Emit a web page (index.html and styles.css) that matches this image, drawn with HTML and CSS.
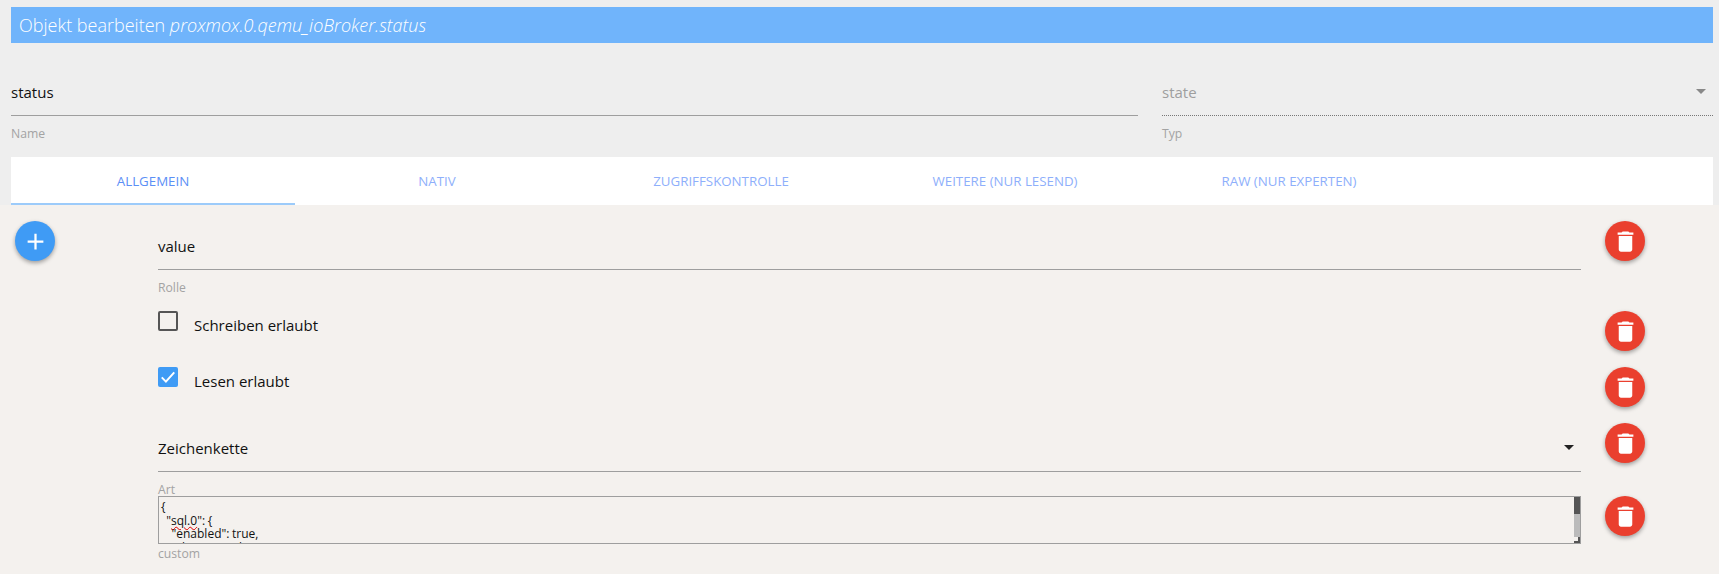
FILE: index.html
```html
<!DOCTYPE html>
<html lang="de">
<head>
  <meta charset="UTF-8">
  <title>Objekt bearbeiten</title>
  <link rel="stylesheet" href="styles.css">
</head>
<body>
  <svg class="defs" width="0" height="0">
    <symbol id="trash" viewBox="0 0 24 24"><path d="M6 19c0 1.1.9 2 2 2h8c1.1 0 2-.9 2-2V7H6v12zM19 4h-3.5l-1-1h-5l-1 1H5v2h14V4z"/></symbol>
  </svg>

  <h1 class="title">Objekt bearbeiten <em>proxmox.0.qemu_ioBroker.status</em></h1>

  <div class="top-fields">
    <div class="field name-field">
      <div class="control">status</div>
      <div class="hint">Name</div>
    </div>
    <div class="field type-field">
      <div class="control disabled">state<span class="arrow"></span></div>
      <div class="hint">Typ</div>
    </div>
  </div>

  <div class="tabs">
    <div class="tab active">Allgemein</div>
    <div class="tab">Nativ</div>
    <div class="tab">Zugriffskontrolle</div>
    <div class="tab">Weitere (nur lesend)</div>
    <div class="tab">Raw (nur Experten)</div>
  </div>

  <div class="pane">
    <div class="add-col">
      <button class="fab add">
        <svg viewBox="0 0 24 24"><path d="M19 13h-6v6h-2v-6H5v-2h6V5h2v6h6v2z"/></svg>
      </button>
    </div>

    <div class="rows">
      <div class="row row-role">
        <div class="cell">
          <div class="control">value</div>
          <div class="hint">Rolle</div>
        </div>
        <button class="fab del"><svg><use href="#trash"/></svg></button>
      </div>

      <div class="row row-check">
        <label class="cell check"><span class="box"></span>Schreiben erlaubt</label>
        <button class="fab del"><svg><use href="#trash"/></svg></button>
      </div>

      <div class="row row-check">
        <label class="cell check"><span class="box checked"><svg viewBox="0 0 24 24"><path d="M4.5 12.5l5 5 10-11"/></svg></span>Lesen erlaubt</label>
        <button class="fab del"><svg><use href="#trash"/></svg></button>
      </div>

      <div class="row row-kind">
        <div class="cell">
          <div class="control kind">Zeichenkette<span class="arrow"></span></div>
          <div class="hint">Art</div>
        </div>
        <button class="fab del"><svg><use href="#trash"/></svg></button>
      </div>

      <div class="row row-custom">
        <div class="cell">
          <div class="json">
<pre>{
  "<span class="typo">sql.0</span>": {
    "enabled": true,
    "changesOnly": true,
  }
}</pre>
            <div class="scrollbar"><div class="thumb"></div><div class="grip"></div></div>
          </div>
          <div class="hint">custom</div>
        </div>
        <button class="fab del"><svg><use href="#trash"/></svg></button>
      </div>
    </div>
  </div>
</body>
</html>
```

FILE: styles.css
```css
html, body {
  height: 100%;
}

body {
  display: flex;
  flex-direction: column;
  margin: 0;
  overflow: hidden;
  background-color: #eeeeee;
  color: #111;
  font-family: "Open Sans", sans-serif;
  font-size: 15px;
}

.defs {
  position: absolute;
}

.title {
  height: 36px;
  margin: 7px 6px 0 11px;
  padding-left: 8px;
  background-color: #70b4fb;
  color: #fff;
  font-size: 18px;
  font-weight: 300;
  line-height: 36px;
}

.top-fields {
  display: flex;
  gap: 24px;
  margin: 25px 6px 0 11px;
  height: 89px;
}

.name-field {
  width: 1127px;
}

.type-field {
  flex: 1;
}

.control {
  position: relative;
  height: 48px;
  box-sizing: border-box;
  padding-top: 10px;
  line-height: 28px;
  border-bottom: 1px solid #9e9e9e;
}

.pane .control {
  height: 49px;
  padding-top: 11px;
}

.disabled {
  color: #9e9e9e;
  border-bottom: 1px dotted #777;
}

.hint {
  margin-top: 10px;
  color: #a3a3a3;
  font-size: 12.2px;
  line-height: 16px;
}

.arrow {
  position: absolute;
  right: 7px;
  top: 21px;
  border-left: 5px solid transparent;
  border-right: 5px solid transparent;
  border-top: 5px solid #888;
}

.kind .arrow {
  top: 22px;
  border-top-color: #222;
}

.tabs {
  display: flex;
  height: 48px;
  margin: 0 6px 0 11px;
  background-color: #fff;
}

.tab {
  width: 284px;
  box-sizing: border-box;
  color: #8eaffb;
  font-size: 13.3px;
  line-height: 49px;
  text-align: center;
  text-transform: uppercase;
}

.active {
  color: #5b8ff6;
  border-bottom: 2px solid #9ccbfa;
}

.pane {
  flex: 1;
  display: flex;
  background-color: #f4f1ee;
}

.add-col {
  width: 158px;
  padding: 16px 0 0 15px;
  box-sizing: border-box;
}

.rows {
  flex: 1;
  padding-top: 16px;
}

.row {
  display: flex;
  gap: 24px;
  align-items: flex-start;
}

.row-role {
  height: 90px;
}

.row-check {
  height: 56px;
}

.row-kind {
  height: 73px;
}

.cell {
  width: 1423px;
}

.fab {
  width: 40px;
  height: 40px;
  padding: 0;
  display: flex;
  align-items: center;
  justify-content: center;
  border: 0;
  border-radius: 50%;
  box-shadow: 0 2px 4px rgba(0, 0, 0, 0.35);
  fill: #fff;
}

.fab svg {
  width: 27px;
  height: 27px;
}

.add {
  background-color: #3f9bf5;
}

.del {
  background-color: #ea3f2e;
}

.check {
  display: flex;
  align-items: flex-start;
  gap: 16px;
  height: 20px;
  line-height: 28px;
}

.box {
  width: 20px;
  height: 20px;
  box-sizing: border-box;
  border: 2px solid #555;
  border-radius: 2px;
}

.box.checked {
  border: 0;
  background-color: #3f9bf5;
}

.box svg {
  display: block;
  width: 20px;
  height: 20px;
  fill: none;
  stroke: #fff;
  stroke-width: 2.4;
}

.json {
  position: relative;
  height: 48px;
  box-sizing: border-box;
  border: 1px solid #9e9e9e;
  overflow: hidden;
}

.json pre {
  margin: 0;
  padding: 3px 2px;
  font-family: "Open Sans", sans-serif;
  font-size: 12px;
  line-height: 13.5px;
  word-spacing: -0.5px;
}

.typo {
  text-decoration: underline wavy #e00000 1px;
  text-underline-offset: 1px;
}

.scrollbar {
  position: absolute;
  top: 0;
  right: 0;
  bottom: 0;
  width: 6px;
  background-color: #bbb;
}

.thumb {
  height: 17px;
  background-color: #555;
}

/* little resize corner of the textarea */
.grip {
  position: absolute;
  right: 0;
  bottom: 0;
  width: 6px;
  height: 6px;
  box-sizing: border-box;
  background-color: #f4f1ee;
  border-right: 2px solid #555;
  border-bottom: 2px solid #555;
  background-clip: padding-box;
}

.row-custom .hint {
  margin-top: 2px;
}
```
